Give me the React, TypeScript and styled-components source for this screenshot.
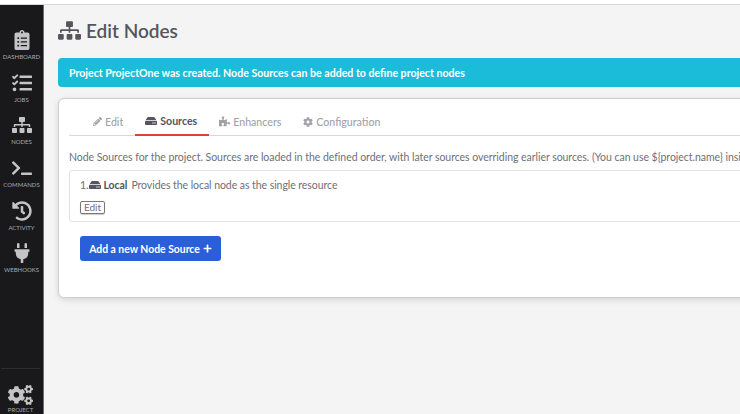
import * as React from "react";
import styled, { createGlobalStyle } from "styled-components";
import {
  FaClipboardList,
  FaTasks,
  FaSitemap,
  FaTerminal,
  FaHistory,
  FaPlug,
  FaCogs,
  FaPencilAlt,
  FaHdd,
  FaPuzzlePiece,
  FaCog,
  FaPlus,
} from "react-icons/fa";

const GlobalStyle = createGlobalStyle`
  html, body {
    margin: 0;
    padding: 0;
    width: 740px;
    height: 414px;
    overflow: hidden;
    background: #f4f4f4;
    font-family: "Lato", "Open Sans", sans-serif;
    color: #6f6f77;
  }
`;

const Page = styled.div`
  display: flex;
  flex-direction: column;
  width: 740px;
  height: 414px;
`;

const TopBar = styled.div`
  height: 4px;
  flex: none;
  background: #ffffff;
  border-bottom: 1px solid #d8d8d8;
`;

const Body = styled.div`
  display: flex;
  flex: 1;
  min-height: 0;
`;

const Sidebar = styled.nav`
  display: flex;
  flex-direction: column;
  flex: none;
  width: 43px;
  background: #19191c;
  border-right: 1px solid #6e6e70;
  padding-top: 25px;
`;

const NavItem = styled.div`
  display: flex;
  flex-direction: column;
  align-items: center;
  height: 42.7px;
  color: #c4c4c6;
  font-size: 20px;
  line-height: 1;
`;

const NavLabel = styled.span`
  font-size: 6px;
  line-height: 8px;
  margin-top: 3px;
  text-transform: uppercase;
  color: #a9a9ad;
  white-space: nowrap;
`;

const FootLabel = styled(NavLabel)`
  margin-top: 1px;
`;

const NavFoot = styled.div`
  margin-top: auto;
  border-top: 1px solid #2e2e31;
  margin-left: 1px;
  margin-right: 3px;
  padding-top: 16px;
  display: flex;
  flex-direction: column;
  align-items: center;
  color: #c4c4c6;
  font-size: 25px;
  line-height: 1;
  height: 29px;
  overflow: hidden;
`;

const Main = styled.main`
  flex: none;
  width: 900px;
  padding: 14px 0 0 14px;
`;

const Title = styled.h1`
  display: flex;
  align-items: center;
  gap: 5px;
  margin: 0;
  height: 23px;
  font-size: 19px;
  font-weight: 600;
  color: #55555e;
`;

const Alert = styled.div`
  margin-top: 16px;
  height: 29px;
  display: flex;
  align-items: center;
  padding-left: 11px;
  border-radius: 4px;
  background: #1bbcd9;
  color: #ffffff;
  font-size: 10.6px;
  font-weight: 700;
`;

const Card = styled.section`
  margin-top: 11px;
  height: 200px;
  box-sizing: border-box;
  padding: 6px 10px 0;
  background: #ffffff;
  border: 1px solid #cfcfcf;
  border-radius: 6px;
  box-shadow: 0 2px 6px rgba(0, 0, 0, 0.12);
`;

const Tabs = styled.div`
  display: flex;
  height: 31px;
  box-sizing: border-box;
  padding-left: 24px;
  gap: 22px;
  border-bottom: 1px solid #d8d8d8;
`;

const Tab = styled.div<{ $active?: boolean }>`
  display: flex;
  align-items: center;
  gap: 3px;
  height: 31px;
  box-sizing: border-box;
  padding: 2px ${(p) => (p.$active ? "12px" : "0")} 0 ${(p) => (p.$active ? "10px" : "0")};
  margin: 0 ${(p) => (p.$active ? "-12px" : "0")} 0 ${(p) => (p.$active ? "-10px" : "0")};
  font-size: 10.6px;
  font-weight: ${(p) => (p.$active ? 700 : 500)};
  color: ${(p) => (p.$active ? "#55555e" : "#a2a2a8")};
  border-bottom: ${(p) => (p.$active ? "2px solid #e0403a" : "none")};
`;

const Help = styled.p`
  margin: 14px 0 0;
  height: 14px;
  font-size: 10.5px;
  letter-spacing: -0.04px;
  line-height: 14px;
  white-space: nowrap;
`;

const SourceBox = styled.div`
  margin-top: 6px;
  height: 52px;
  box-sizing: border-box;
  padding: 7px 10px 0;
  border: 1px solid #e2e2e2;
  border-radius: 3px;
`;

const SourceRow = styled.div`
  display: flex;
  align-items: center;
  height: 14px;
  font-size: 10.5px;
  letter-spacing: -0.06px;
  white-space: nowrap;
`;

const SourceIcon = styled(FaHdd)`
  margin-left: 1px;
  color: #55555e;
`;

const SourceName = styled.strong`
  margin: 0 4px 0 2px;
  font-weight: 700;
  color: #55555e;
`;

const EditButton = styled.button`
  display: block;
  margin: 9px 0 0;
  padding: 0;
  width: 25px;
  height: 13px;
  background: #ffffff;
  border: 1px solid #777;
  border-radius: 2px;
  box-shadow: 0 1px 1px rgba(0, 0, 0, 0.2);
  font-family: inherit;
  font-size: 10px;
  line-height: 11px;
  color: #6f6f77;
`;

const AddButton = styled.button`
  display: flex;
  align-items: center;
  justify-content: center;
  gap: 3px;
  margin: 14px 0 0 11px;
  height: 25px;
  width: 141px;
  box-sizing: border-box;
  background: #2b5fd9;
  border: none;
  border-radius: 3px;
  color: #ffffff;
  font-family: inherit;
  font-size: 10.4px;
  font-weight: 700;
`;

const navItems = [
  { label: "Dashboard", icon: <FaClipboardList /> },
  { label: "Jobs", icon: <FaTasks /> },
  { label: "Nodes", icon: <FaSitemap /> },
  { label: "Commands", icon: <FaTerminal /> },
  { label: "Activity", icon: <FaHistory /> },
  { label: "Webhooks", icon: <FaPlug /> },
];

export default function App() {
  return (
    <Page>
      <GlobalStyle />
      <TopBar />
      <Body>
        <Sidebar>
          {navItems.map((item) => (
            <NavItem key={item.label}>
              {item.icon}
              <NavLabel>{item.label}</NavLabel>
            </NavItem>
          ))}
          <NavFoot>
            <FaCogs />
            <FootLabel>Project</FootLabel>
          </NavFoot>
        </Sidebar>
        <Main>
          <Title>
            <FaSitemap size={23} />
            Edit Nodes
          </Title>
          <Alert>Project ProjectOne was created. Node Sources can be added to define project nodes</Alert>
          <Card>
            <Tabs>
              <Tab><FaPencilAlt size={9} />Edit</Tab>
              <Tab $active><FaHdd size={12} />Sources</Tab>
              <Tab><FaPuzzlePiece size={11} />Enhancers</Tab>
              <Tab><FaCog size={10} />Configuration</Tab>
            </Tabs>
            <Help>
              Node Sources for the project. Sources are loaded in the defined order, with later sources overriding earlier sources. (You can use {"${project.name}"} inside)
            </Help>
            <SourceBox>
              <SourceRow>
                1.<SourceIcon size={12} />
                <SourceName>Local</SourceName>
                Provides the local node as the single resource
              </SourceRow>
              <EditButton>Edit</EditButton>
            </SourceBox>
            <AddButton>Add a new Node Source <FaPlus size={9} /></AddButton>
          </Card>
        </Main>
      </Body>
    </Page>
  );
}
